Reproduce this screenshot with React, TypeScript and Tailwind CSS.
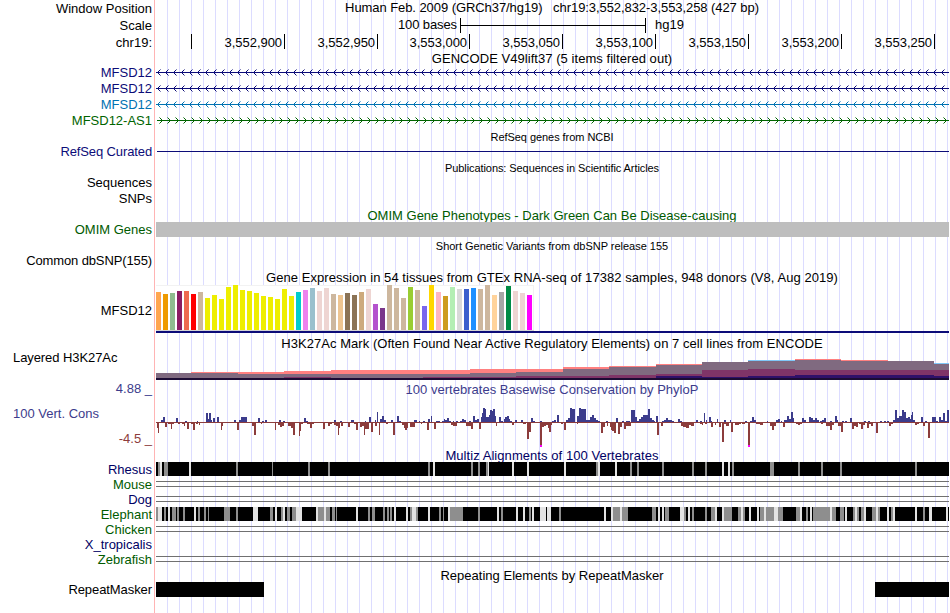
import React from 'react';

type Span = [number, number];
type Bar = [number, number, number];

// Coordinates inside a tile are in thirds of a pixel, counted from the tile's left edge
const SUB = 3;

interface WiggleTile {
  origin: number;
  up: Bar[];
  down: Bar[];
}

interface AlignTile {
  origin: number;
  gray: Span[];
  light: Span[];
}

const labels = [
  { text: 'Window Position', className: 'mt-px text-right text-black' },
  { text: 'Scale', className: 'mt-0.5 text-right text-black' },
  { text: 'chr19:', className: 'mt-0.5 text-right text-black' },
  { text: 'MFSD12', className: 'mt-[15px] text-right text-[#0c0c78]' },
  { text: 'MFSD12', className: 'mt-px text-right text-[#0c0c78]' },
  { text: 'MFSD12', className: 'mt-px text-right text-[#0072b2]' },
  { text: 'MFSD12-AS1', className: 'mt-px text-right text-[#006400]' },
  { text: 'RefSeq Curated', className: 'mt-4 text-right tracking-[-0.12px] text-[#0c0c78]' },
  { text: 'Sequences', className: 'mt-4 text-right text-black' },
  { text: 'SNPs', className: 'mt-px text-right text-black' },
  { text: 'OMIM Genes', className: 'mt-4 text-right text-[#005a00]' },
  { text: 'Common dbSNP(155)', className: 'mt-4 text-right tracking-[-0.12px] text-black' },
  { text: 'MFSD12', className: 'mt-[35px] text-right text-black' },
  { text: 'Layered H3K27Ac', className: 'mt-8 pl-[13px] text-left tracking-[-0.08px] text-black' },
  { text: '4.88 _', className: 'mt-4 text-right text-[#3c3c8c]' },
  { text: '100 Vert. Cons', className: 'mt-[10px] pl-[13px] text-left text-[#3c3c8c]' },
  { text: '-4.5 _', className: 'mt-[10px] text-right text-[#8c3c3c]' },
  { text: 'Rhesus', className: 'mt-4 text-right text-[#000064]' },
  { text: 'Mouse', className: 'text-right text-[#005a00]' },
  { text: 'Dog', className: 'text-right text-[#000064]' },
  { text: 'Elephant', className: 'text-right text-[#005a00]' },
  { text: 'Chicken', className: 'text-right text-[#005a00]' },
  { text: 'X_tropicalis', className: 'text-right text-[#000064]' },
  { text: 'Zebrafish', className: 'text-right text-[#005a00]' },
  { text: 'RepeatMasker', className: 'mt-[15px] text-right tracking-[-0.08px] text-black' },
];

const ruler = [
  { text: '', className: 'w-[37px]' },
  { text: '3,552,900', className: 'w-[93px]' },
  { text: '3,552,950', className: 'w-[93px]' },
  { text: '3,553,000', className: 'w-[92px]' },
  { text: '3,553,050', className: 'w-[93px]' },
  { text: '3,553,100', className: 'w-[93px]' },
  { text: '3,553,150', className: 'w-[93px]' },
  { text: '3,553,200', className: 'w-[93px]' },
  { text: '3,553,250', className: 'w-[93px]' },
];

// GTEx tissues: bar height and tissue colour
const tissues: [number, string][] = [
  [38, '#ffa54f'], [36, '#ee9a00'], [37, '#8fbc8f'], [39, '#8b1c62'], [39, '#ee6a50'], [36, '#ff0000'],
  [38, '#cdb79e'], [32, '#eeee00'], [35, '#eeee00'], [31, '#eeee00'], [43, '#eeee00'], [45, '#eeee00'],
  [40, '#eeee00'], [39, '#eeee00'], [37, '#eeee00'], [34, '#eeee00'], [33, '#eeee00'], [31, '#eeee00'],
  [41, '#eeee00'], [34, '#eeee00'], [38, '#00cdcd'], [40, '#ee82ee'], [42, '#9ac0cd'], [39, '#eed5d2'],
  [42, '#eed5d2'], [36, '#cdb79e'], [35, '#eec591'], [37, '#8b7355'], [35, '#8b7355'], [38, '#cdaa7d'],
  [41, '#eed5d2'], [26, '#b452cd'], [22, '#7a378b'], [45, '#cdb79e'], [42, '#cdb79e'], [32, '#cdb79e'],
  [43, '#9acd32'], [40, '#cdb79e'], [24, '#7a67ee'], [45, '#ffd700'], [38, '#ffb6c1'], [34, '#cd9b1d'],
  [43, '#b4eeb4'], [41, '#d9d9d9'], [41, '#3a5fcd'], [42, '#1e90ff'], [41, '#cdb79e'], [45, '#cdb79e'],
  [35, '#ffd39b'], [38, '#a6a6a6'], [44, '#008b45'], [39, '#eed5d2'], [37, '#eed5d2'], [35, '#ff00ff'],
];

const SALMON = '#ff8080';
const SKY = '#80c8f8';

// H3K27Ac steps: start, end, top, top colour, then the y of the gray, purple and indigo layers
const histone: [number, number, number, string, number, number, number][] = [
  [156, 191, 373, SALMON, 373, 378, 379],
  [191, 238, 372, SALMON, 373, 378, 379],
  [238, 284, 372, SALMON, 374, 378, 379],
  [284, 331, 371, SALMON, 374, 377, 378],
  [331, 377, 370, SALMON, 374, 378, 379],
  [377, 423, 370, SALMON, 374, 378, 379],
  [423, 470, 370, SALMON, 374, 377, 378],
  [470, 516, 369, SALMON, 373, 377, 378],
  [516, 563, 369, SALMON, 372, 376, 378],
  [563, 609, 367, SALMON, 369, 376, 378],
  [609, 656, 366, SALMON, 367, 375, 378],
  [656, 702, 364, SALMON, 365, 374, 376],
  [702, 748, 362, SALMON, 362, 370, 377],
  [748, 795, 360, SKY, 361, 369, 376],
  [795, 841, 359, SALMON, 360, 370, 375],
  [841, 888, 360, SALMON, 361, 370, 375],
  [888, 934, 361, SALMON, 361, 370, 375],
  [934, 949, 363, SKY, 364, 370, 376],
];

const wiggle: WiggleTile[] = [
  {
    origin: 150,
    up: [
      [33, 39, 2], [39, 45, 5], [78, 84, 4], [106, 110, 1], [141, 145, 1], [168, 174, 9], [174, 177, 3],
      [177, 183, 9], [183, 187, 2], [188, 194, 4], [201, 207, 5], [252, 258, 2], [267, 273, 2], [273, 291, 5],
      [324, 330, 4], [336, 342, 1], [345, 351, 2], [387, 393, 2], [399, 405, 1], [462, 468, 4], [468, 474, 1],
      [552, 558, 2], [570, 575, 1], [603, 612, 2], [645, 648, 1], [657, 663, 5], [675, 678, 2], [681, 684, 10],
      [690, 696, 3], [696, 702, 6], [702, 708, 2], [723, 729, 2], [741, 747, 6], [747, 753, 1], [792, 800, 2],
      [806, 810, 1],
    ],
    down: [
      [21, 24, 6], [24, 27, 11], [45, 51, 5], [54, 62, 2], [63, 66, 7], [66, 72, 2], [84, 90, 2], [96, 102, 2],
      [102, 105, 4], [111, 117, 7], [123, 129, 2], [129, 135, 8], [138, 144, 2], [146, 150, 3], [195, 200, 1],
      [213, 216, 8], [216, 219, 4], [222, 240, 1], [261, 267, 8], [291, 297, 1], [300, 306, 1], [306, 312, 4],
      [312, 318, 13], [333, 336, 2], [360, 372, 1], [375, 378, 8], [384, 390, 3], [390, 396, 5], [396, 402, 4],
      [408, 414, 1], [414, 423, 4], [423, 429, 6], [429, 435, 13], [441, 446, 1], [447, 450, 14], [450, 453, 9],
      [453, 459, 2], [471, 480, 2], [480, 486, 6], [486, 492, 2], [519, 525, 7], [534, 540, 4], [540, 546, 2],
      [552, 558, 3], [558, 564, 4], [564, 567, 13], [567, 570, 6], [573, 579, 4], [594, 600, 5], [612, 618, 2],
      [618, 624, 8], [630, 636, 5], [636, 642, 4], [642, 645, 13], [645, 651, 7], [651, 657, 7], [663, 669, 10],
      [675, 680, 4], [687, 690, 13], [696, 702, 1], [708, 714, 2], [729, 735, 13], [735, 741, 1], [756, 762, 3],
      [762, 765, 6], [765, 771, 8], [771, 774, 6], [780, 795, 5], [801, 810, 1],
    ],
  },
  {
    origin: 420,
    up: [
      [9, 15, 1], [24, 30, 3], [33, 36, 6], [48, 60, 1], [66, 72, 1], [72, 75, 3], [75, 81, 2], [81, 87, 4],
      [87, 93, 1], [99, 102, 1], [108, 114, 1], [120, 126, 1], [126, 132, 3], [132, 138, 2], [147, 153, 1],
      [159, 165, 6], [165, 171, 2], [171, 177, 3], [183, 186, 5], [186, 189, 9], [189, 195, 14], [195, 198, 13],
      [198, 207, 5], [207, 210, 7], [210, 216, 12], [216, 219, 11], [219, 225, 13], [225, 228, 6], [237, 243, 5],
      [243, 249, 1], [252, 255, 3], [255, 261, 5], [261, 267, 6], [267, 270, 3], [270, 276, 1], [285, 291, 2],
      [303, 309, 2], [333, 339, 4], [339, 345, 1], [360, 365, 1], [396, 402, 1], [402, 408, 2], [411, 417, 7],
      [438, 444, 2], [444, 450, 4], [450, 456, 14], [456, 465, 13], [471, 477, 6], [477, 483, 14], [483, 499, 13],
      [499, 510, 2], [510, 516, 5], [516, 522, 7], [522, 528, 4], [528, 534, 2], [534, 540, 1], [559, 565, 1],
      [588, 594, 4], [606, 612, 1], [618, 630, 1], [633, 645, 12], [645, 651, 5], [651, 657, 1], [657, 663, 3],
      [663, 669, 5], [669, 684, 7], [684, 690, 13], [690, 696, 4], [696, 702, 2], [702, 706, 1], [708, 714, 6],
      [726, 732, 1], [732, 738, 2], [738, 744, 4], [744, 756, 2], [756, 762, 1], [774, 780, 3], [780, 786, 1],
    ],
    down: [
      [3, 6, 2], [15, 21, 1], [21, 27, 8], [36, 39, 1], [42, 48, 7], [60, 66, 1], [93, 99, 3], [99, 105, 4],
      [105, 111, 4], [111, 117, 1], [138, 153, 4], [153, 159, 7], [165, 171, 1], [177, 183, 7], [228, 231, 4],
      [249, 255, 1], [261, 270, 1], [276, 282, 3], [291, 300, 1], [309, 318, 2], [321, 327, 17], [327, 333, 10],
      [345, 357, 1], [360, 366, 23], [366, 372, 5], [372, 378, 4], [378, 384, 3], [384, 387, 6], [387, 393, 10],
      [393, 396, 3], [423, 429, 2], [432, 438, 8], [438, 444, 1], [471, 474, 2], [534, 540, 1], [543, 549, 11],
      [549, 555, 5], [561, 564, 4], [564, 570, 1], [570, 573, 5], [573, 576, 8], [576, 582, 9], [582, 588, 11],
      [594, 600, 12], [600, 606, 5], [612, 618, 7], [618, 633, 4], [711, 717, 13], [717, 723, 1], [723, 729, 4],
      [762, 774, 1], [786, 792, 4], [792, 798, 5], [798, 808, 6],
    ],
  },
  {
    origin: 680,
    up: [
      [48, 54, 2], [60, 66, 1], [72, 75, 9], [78, 81, 2], [87, 93, 5], [93, 96, 1], [111, 114, 3], [132, 138, 2],
      [150, 153, 2], [195, 201, 1], [210, 216, 1], [216, 222, 5], [222, 227, 2], [261, 264, 1], [288, 294, 2],
      [294, 300, 3], [303, 306, 1], [312, 321, 2], [321, 327, 6], [327, 333, 3], [333, 339, 10], [339, 342, 4],
      [366, 372, 4], [372, 378, 2], [387, 393, 5], [393, 399, 4], [399, 405, 2], [405, 411, 4], [411, 417, 2],
      [420, 426, 1], [426, 432, 2], [432, 438, 4], [450, 456, 1], [465, 471, 6], [471, 474, 2], [486, 492, 1],
      [495, 501, 1], [510, 516, 4], [552, 558, 1], [564, 570, 1], [600, 606, 1], [612, 618, 1], [621, 627, 1],
      [639, 645, 2], [645, 651, 12], [651, 657, 4], [657, 666, 6], [666, 672, 12], [672, 678, 10], [678, 684, 4],
      [684, 690, 5], [690, 693, 3], [693, 696, 7], [696, 699, 10], [699, 705, 2], [723, 729, 5], [735, 741, 1],
      [756, 768, 5], [768, 774, 1], [777, 783, 5], [783, 789, 2], [789, 795, 9], [795, 801, 1], [801, 807, 12],
    ],
    down: [
      [3, 9, 4], [9, 21, 5], [21, 27, 6], [27, 33, 3], [33, 42, 4], [42, 46, 1], [60, 66, 2], [66, 69, 3],
      [75, 81, 2], [81, 87, 1], [93, 99, 5], [99, 105, 1], [105, 108, 3], [117, 123, 5], [126, 132, 20],
      [132, 138, 2], [138, 147, 4], [153, 159, 10], [165, 177, 3], [177, 183, 2], [183, 186, 1], [186, 195, 2],
      [204, 210, 23], [228, 240, 2], [240, 249, 3], [255, 261, 1], [270, 276, 4], [276, 282, 8], [282, 288, 4],
      [309, 315, 5], [342, 348, 1], [348, 354, 2], [354, 360, 3], [360, 366, 2], [423, 429, 2], [438, 450, 4],
      [450, 456, 8], [456, 462, 3], [468, 474, 1], [474, 483, 4], [483, 489, 10], [498, 504, 1], [516, 522, 7],
      [522, 528, 4], [528, 534, 5], [537, 543, 2], [543, 549, 7], [549, 555, 3], [561, 567, 6], [567, 573, 2],
      [573, 579, 4], [579, 585, 1], [588, 594, 11], [603, 609, 1], [618, 624, 1], [627, 633, 4], [633, 639, 2],
      [705, 711, 3], [711, 717, 2], [729, 735, 4], [744, 750, 16], [753, 756, 1],
    ],
  },
];

const rhesus: AlignTile[] = [
  {
    origin: 150,
    gray: [[24, 30], [42, 54], [258, 264], [366, 369], [474, 480], [534, 540]],
    light: [[30, 36], [117, 123]],
  },
  {
    origin: 420,
    gray: [[24, 30], [153, 159], [174, 180], [198, 204], [528, 534], [630, 636], [651, 657], [726, 732]],
    light: [[39, 45], [204, 207], [276, 282], [321, 327], [432, 438], [534, 540], [585, 591]],
  },
  {
    origin: 680,
    gray: [[36, 42], [75, 81], [156, 162], [270, 282], [354, 360], [423, 429], [480, 486], [705, 711]],
    light: [[126, 132], [144, 150]],
  },
];

const elephant: AlignTile[] = [
  {
    origin: 150,
    gray: [
      [18, 24], [42, 48], [66, 78], [81, 87], [99, 105], [144, 150], [162, 168], [174, 177], [222, 240],
      [258, 264], [360, 369], [393, 399], [411, 420], [426, 438], [504, 522], [528, 540], [546, 555],
      [558, 561], [654, 660], [666, 675], [699, 705], [711, 717], [720, 726], [780, 786], [798, 804],
    ],
    light: [
      [24, 36], [54, 60], [132, 138], [309, 324], [375, 381], [399, 405], [438, 456], [498, 504], [522, 528],
      [618, 624], [732, 738], [768, 774], [786, 798],
    ],
  },
  {
    origin: 420,
    gray: [
      [57, 63], [69, 72], [90, 129], [174, 180], [243, 249], [327, 333], [417, 423], [579, 600], [606, 624],
      [696, 708], [735, 747], [792, 798],
    ],
    light: [
      [24, 30], [84, 90], [231, 237], [288, 294], [309, 315], [336, 342], [360, 378], [381, 393], [552, 558],
      [573, 579], [600, 606], [714, 720], [726, 732], [780, 792],
    ],
  },
  {
    origin: 680,
    gray: [
      [12, 18], [36, 42], [75, 81], [93, 105], [132, 156], [174, 183], [189, 195], [240, 252], [258, 282],
      [294, 309], [348, 360], [378, 384], [399, 450], [456, 468], [480, 492], [519, 525], [531, 537],
      [543, 552], [576, 588], [594, 600], [633, 639], [729, 735],
    ],
    light: [
      [0, 12], [24, 30], [105, 111], [126, 132], [183, 189], [207, 213], [231, 237], [252, 258], [282, 294],
      [360, 366], [390, 396], [450, 456], [495, 501], [525, 531], [552, 558], [588, 594], [621, 627],
      [639, 645], [705, 711], [747, 756], [798, 804],
    ],
  },
];

const Title: React.FC<{ className: string; children: React.ReactNode }> = ({ className, children }) => (
  <div className={`h-[15px] leading-[15px] whitespace-pre text-center ${className}`}>{children}</div>
);

const IntronTrack: React.FC<{ color: string; strand: '+' | '-'; className: string }> = ({ color, strand, className }) => {
  const first = strand === '-' ? 157 : 162;
  const dir = strand === '-' ? 1 : -1;
  const tips = Array.from({ length: 99 }, (_, i) => first + i * 8);
  return (
    <svg className={`block h-[9px] w-[794px] shrink-0 ${className}`} viewBox="155 0 794 9" fill={color} shapeRendering="crispEdges">
      <rect x={157} y={4} width={792} height={1} />
      {tips.map((x) => (
        <g key={x}>
          {strand === '-' && x === 157 && <rect x={156} y={4} width={1} height={1} />}
          <rect x={x + dir} y={3} width={1} height={1} />
          <rect x={x + dir} y={5} width={1} height={1} />
          <rect x={x + dir * 2} y={2} width={1} height={1} />
          <rect x={x + dir * 2} y={6} width={1} height={1} />
          <rect x={x + dir * 3} y={1} width={1} height={1} opacity={0.5} />
          <rect x={x + dir * 3} y={7} width={1} height={1} opacity={0.5} />
        </g>
      ))}
    </svg>
  );
};

const AlignTrack: React.FC<{ tiles: AlignTile[]; className: string }> = ({ tiles, className }) => (
  <svg className={`block h-[14px] w-[794px] shrink-0 ${className}`} viewBox="155 0 794 14" shapeRendering="crispEdges">
    <rect x={156} y={0} width={793} height={14} fill="#000" />
    {tiles.map((t) => (
      <g key={t.origin}>
        {t.gray.map(([a, b]) => (
          <rect key={a} x={t.origin + a / SUB} y={0} width={(b - a) / SUB} height={14} fill="#8e8e8e" />
        ))}
        {t.light.map(([a, b]) => (
          <rect key={a} x={t.origin + a / SUB} y={0} width={(b - a) / SUB} height={14} fill="#e3e3e3" />
        ))}
      </g>
    ))}
  </svg>
);

const GapLines: React.FC<{ className: string }> = ({ className }) => (
  <div className={`ml-px h-[6px] shrink-0 border-y border-[#707070] ${className}`} />
);

const App: React.FC = () => {
  return (
    <div className="flex h-[613px] w-[949px] overflow-hidden bg-white font-['Liberation_Sans',Arial,sans-serif] text-[13px]">
      <div className="flex w-[154px] shrink-0 flex-col">
        {labels.map((l, i) => (
          <div key={i} className={`h-[15px] shrink-0 pr-[2px] leading-[15px] whitespace-nowrap ${l.className}`}>
            {l.text}
          </div>
        ))}
      </div>
      <div className="w-px shrink-0 bg-[#ffb4b4]" />
      <div className="flex w-[794px] shrink-0 flex-col bg-[repeating-linear-gradient(to_right,#dcdcff_0px,#dcdcff_1px,transparent_1px,transparent_12px)] bg-[position:12px_0] bg-no-repeat text-black">
        <Title className="tracking-[-0.07px]">{'Human Feb. 2009 (GRCh37/hg19)   chr19:3,552,832-3,553,258 (427 bp)'}</Title>
        <div className="mt-0.5 flex h-4 leading-[15px]">
          <div className="w-[305px] pr-[3px] text-right tracking-[-0.1px]">100 bases</div>
          <div className="mt-px flex h-[15px] w-[186px] items-center border-x border-black">
            <div className="h-px w-full bg-black" />
          </div>
          <div className="pl-[9px]">hg19</div>
        </div>
        <div className="mt-px flex h-[15px]">
          {ruler.map((r, i) => (
            <div key={i} className={`shrink-0 border-r border-black pt-px pr-[2px] text-right leading-[15px] tracking-[-0.05px] ${r.className}`}>
              {r.text}
            </div>
          ))}
        </div>

        <Title className="mt-0.5 tracking-[0.05px]">GENCODE V49lift37 (5 items filtered out)</Title>
        <IntronTrack className="mt-0.5" color="#0c0c78" strand="-" />
        <IntronTrack className="mt-[7px]" color="#0c0c78" strand="-" />
        <IntronTrack className="mt-[7px]" color="#0072b2" strand="-" />
        <IntronTrack className="mt-[7px]" color="#006400" strand="+" />

        <Title className="mt-[5px] text-[11px] tracking-[-0.05px]">RefSeq genes from NCBI</Title>
        <div className="mt-1.5 ml-0.5 h-px shrink-0 bg-[#0c0c78]" />
        <Title className="mt-[9px] text-[11px] tracking-[-0.08px]">Publications: Sequences in Scientific Articles</Title>

        <Title className="mt-8 tracking-[0.01px] text-[#005a00]">OMIM Gene Phenotypes - Dark Green Can Be Disease-causing</Title>
        <div className="-mt-px ml-px h-[15px] shrink-0 bg-[#bebebe]" />
        <Title className="mt-0.5 text-[11px] tracking-[-0.02px]">Short Genetic Variants from dbSNP release 155</Title>

        <Title className="mt-4 tracking-[0.05px]">Gene Expression in 54 tissues from GTEx RNA-seq of 17382 samples, 948 donors (V8, Aug 2019)</Title>
        <svg className="block h-[46px] w-[794px] shrink-0" viewBox="155 0 794 46" shapeRendering="crispEdges">
          <rect x={156} y={0} width={378} height={45} fill="#f2f2f2" />
          <rect x={156} y={1} width={377} height={44} fill="#fff" />
          <rect x={156} y={45} width={378} height={1} fill="#d4d4d4" />
          {tissues.map(([h, color], i) => (
            <rect key={i} x={156 + i * 7} y={45 - h} width={5} height={h} fill={color} />
          ))}
        </svg>
        <div className="ml-px h-0.5 shrink-0 bg-[#0c0c78]" />

        <Title className="mt-[3px] tracking-[0.045px]">H3K27Ac Mark (Often Found Near Active Regulatory Elements) on 7 cell lines from ENCODE</Title>
        <svg className="block h-[29px] w-[794px] shrink-0" viewBox="155 351 794 29" shapeRendering="crispEdges">
          {histone.map(([x0, x1, top, color, gray, purple, indigo]) => (
            <g key={x0}>
              <rect x={x0} y={top} width={x1 - x0} height={380 - top} fill={color} />
              <rect x={x0} y={gray} width={x1 - x0} height={380 - gray} fill="#806a80" />
              <rect x={x0} y={purple} width={x1 - x0} height={380 - purple} fill="#803468" />
              <rect x={x0} y={indigo} width={x1 - x0} height={380 - indigo} fill="#30106a" />
            </g>
          ))}
          <rect x={156} y={378} width={793} height={2} fill="#1c0c34" />
        </svg>

        <Title className="mt-0.5 tracking-[0.02px] text-[#3c3c8c]">100 vertebrates Basewise Conservation by PhyloP</Title>
        <svg className="block h-[51px] w-[794px] shrink-0" viewBox="155 397 794 51" shapeRendering="crispEdges">
          <rect x={156} y={422} width={793} height={1} fill="#8c3c3c" />
          {wiggle.map((t) => (
            <g key={t.origin}>
              {t.up.map(([a, b, h]) => (
                <rect key={a} x={t.origin + a / SUB} y={422 - h} width={(b - a) / SUB} height={h} fill="#3c3c8c" />
              ))}
              {t.down.map(([a, b, h]) => (
                <rect key={a} x={t.origin + a / SUB} y={422} width={(b - a) / SUB} height={h} fill="#8c3c3c" />
              ))}
            </g>
          ))}
          {/* values clipped at the bottom of the range */}
          <rect x={540} y={445} width={2} height={2} fill="#ff00ff" />
          <rect x={748} y={445} width={2} height={2} fill="#ff00ff" />
        </svg>

        <Title className="tracking-[0.06px] text-[#000064]">Multiz Alignments of 100 Vertebrates</Title>
        <AlignTrack className="-mt-px" tiles={rhesus} />
        <GapLines className="mt-[5px]" />
        <GapLines className="mt-[9px]" />
        <AlignTrack className="mt-[5px]" tiles={elephant} />
        <GapLines className="mt-[5px]" />
        <GapLines className="mt-6" />

        <Title className="mt-1.5 tracking-[0.02px]">Repeating Elements by RepeatMasker</Title>
        <div className="-mt-px ml-px flex h-[15px] shrink-0 justify-between">
          <div className="w-[108px] bg-black" />
          <div className="w-[74px] bg-black" />
        </div>
      </div>
    </div>
  );
};

export default App;
